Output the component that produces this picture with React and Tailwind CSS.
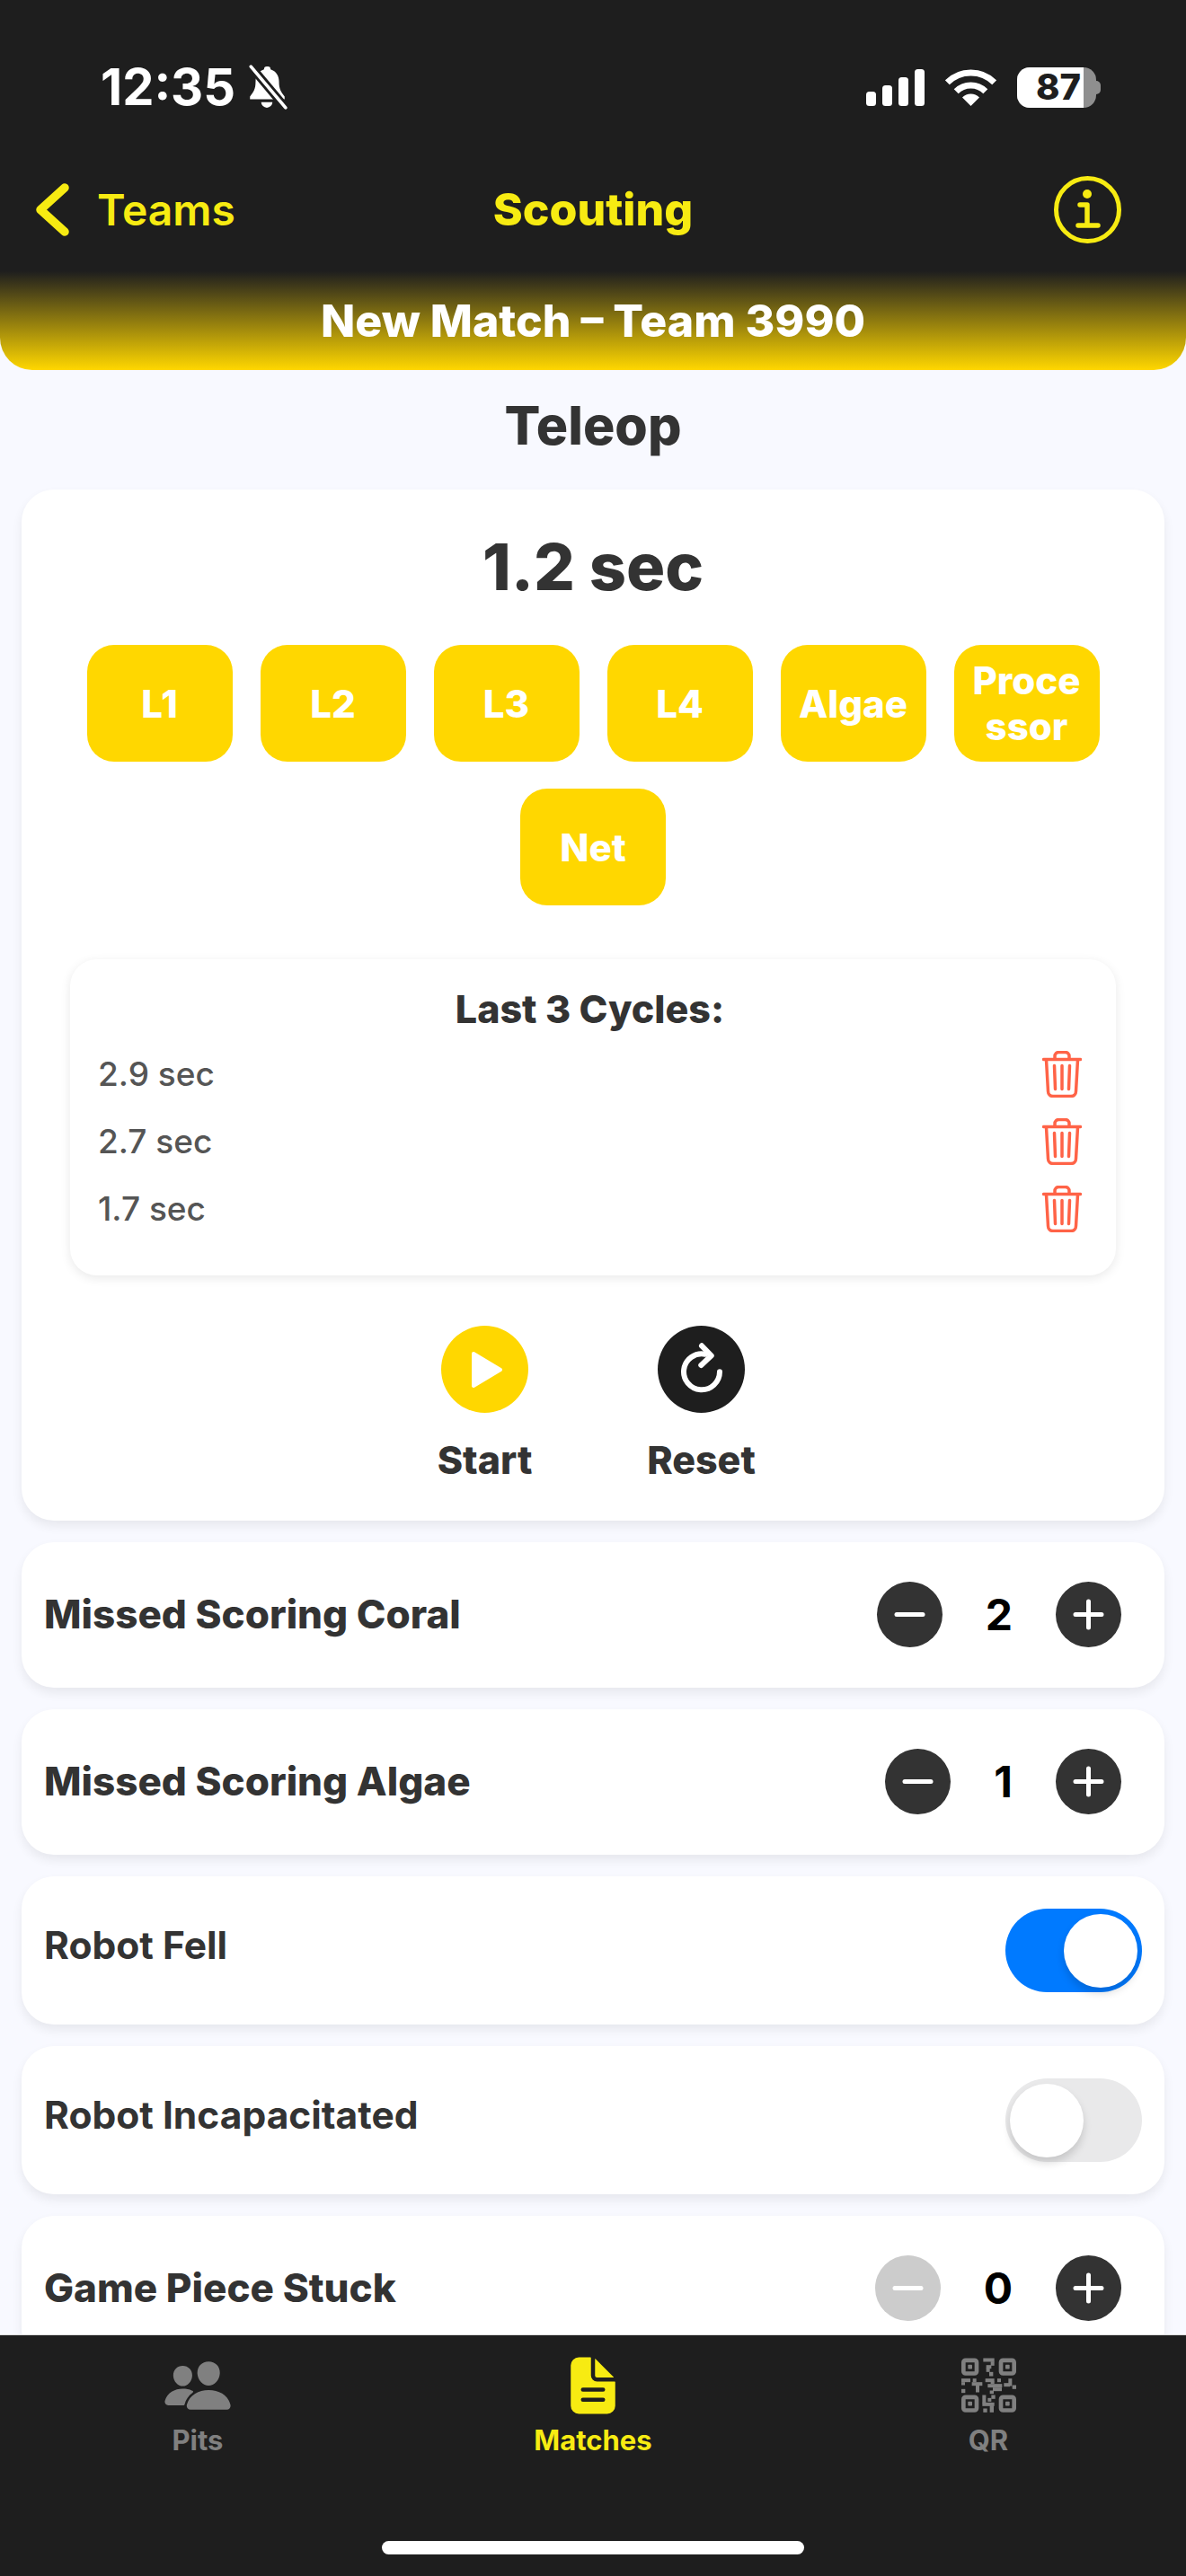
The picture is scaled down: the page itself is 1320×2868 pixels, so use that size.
import React from 'react';
import { IoPeople, IoDocumentText } from 'react-icons/io5';

const cycleButtons = ['L1', 'L2', 'L3', 'L4', 'Algae', 'Proce\nssor', 'Net'];
const cycles = ['2.9 sec', '2.7 sec', '1.7 sec'];

const Signal = () => (
  <svg width="65" height="41" viewBox="0 0 65 41" fill="#fff">
    <rect x="0" y="25" width="11" height="16" rx="3.5" />
    <rect x="18" y="18" width="11" height="23" rx="3.5" />
    <rect x="36" y="9" width="11" height="32" rx="3.5" />
    <rect x="54" y="0" width="11" height="41" rx="3.5" />
  </svg>
);

const Wifi = () => (
  <svg width="57" height="42" viewBox="0 0 57 42" fill="none">
    <path d="M2.3 15.8A37 37 0 0 1 54.7 15.8" stroke="#fff" strokeWidth="7" />
    <path d="M12.2 25.7A23 23 0 0 1 44.8 25.7" stroke="#fff" strokeWidth="7" />
    <path d="M28.5 42L19 32.5A13.5 13.5 0 0 1 38 32.5Z" fill="#fff" />
  </svg>
);

const BellSlash = () => (
  <svg width="47" height="50" viewBox="0 0 45 48">
    <path d="M22 2c-2 0-3 1-3 3-6 2-9 7-9 13 0 8-2 11-6 16v3h37v-3c-4-5-6-8-6-16 0-6-3-11-9-13 0-2-1-3-3-3z" fill="#fff" />
    <path d="M16 40a6 6 0 0 0 12 0z" fill="#fff" />
    <path d="M5 2L42 46" stroke="#1e1e1e" strokeWidth="9" />
    <path d="M5 2L42 46" stroke="#fff" strokeWidth="3.5" strokeLinecap="round" />
  </svg>
);

const Battery = () => (
  <div className="flex items-center">
    <div className="flex h-[45px] w-[88px] rounded-[14px] bg-[#8f8f8f]">
      <div className="flex w-[74px] items-center justify-end rounded-l-[14px] bg-white pr-[3px] text-[40px] font-extrabold leading-none text-[#1e1e1e]">87</div>
    </div>
    <div className="h-[15px] w-[5px] rounded-r-full bg-[#8f8f8f]" />
  </div>
);

const Chevron = () => (
  <svg width="37" height="59" viewBox="0 0 37 59" fill="none">
    <path d="M32 5L5 29.5L32 54" stroke="#f7eb12" strokeWidth="9.5" strokeLinecap="round" strokeLinejoin="round" />
  </svg>
);

const InfoIcon = () => (
  <svg width="75" height="75" viewBox="0 0 75 75" fill="none">
    <circle cx="37.5" cy="37.5" r="35" stroke="#f7eb12" strokeWidth="5" />
    <circle cx="37" cy="20" r="5" fill="#f7eb12" />
    <path d="M29 32H37V55M27 55H49" stroke="#f7eb12" strokeWidth="5.5" strokeLinecap="round" strokeLinejoin="round" />
  </svg>
);

const Trash = () => (
  <svg width="44" height="52" viewBox="0 0 44 52" fill="none" stroke="#ff6347" strokeWidth="3.5" strokeLinecap="round">
    <path d="M1.5 9.5H42.5" />
    <path d="M14 9V6a4.5 4.5 0 0 1 4.5-4.5h7A4.5 4.5 0 0 1 30 6v3" />
    <path d="M4.5 10l2 35a5.5 5.5 0 0 0 5.5 5.5h20a5.5 5.5 0 0 0 5.5-5.5l2-35" />
    <path d="M13.5 16.5l1 26M22 16.5v26M30.5 16.5l-1 26" />
  </svg>
);

const MinusIcon = () => (
  <svg width="35" height="35" viewBox="0 0 35 35"><path d="M3 17.5H32" stroke="#fff" strokeWidth="5" strokeLinecap="round" /></svg>
);

const PlusIcon = () => (
  <svg width="35" height="35" viewBox="0 0 35 35"><path d="M3 17.5H32M17.5 3V32" stroke="#fff" strokeWidth="5" strokeLinecap="round" /></svg>
);

const RefreshIcon = () => (
  <svg width="97" height="97" viewBox="0 0 97 97" fill="none" stroke="#fff" strokeWidth="6" strokeLinecap="round" strokeLinejoin="round">
    <path d="M69 51.3A20 20 0 1 1 53 31.7" />
    <path d="M49 22.3L59.7 33.3L48.3 44" />
  </svg>
);

// finder squares sit in the corners, the rest are loose modules
const qrModules = [
  [103, 32, 37, 12], [128, 43, 12, 14], [113, 55, 17, 12], [113, 65, 12, 13], [123, 78, 13, 14],
  [30, 100, 30, 12], [30, 112, 12, 10], [30, 135, 13, 13], [68, 100, 12, 12], [65, 112, 35, 12], [78, 122, 12, 24],
  [110, 100, 30, 12], [128, 110, 12, 8], [118, 118, 48, 12], [135, 130, 30, 12], [125, 140, 13, 11],
  [172, 115, 20, 12], [187, 100, 12, 25], [200, 122, 13, 13], [150, 100, 12, 12],
  [100, 155, 12, 27], [100, 180, 40, 12], [118, 165, 12, 12], [125, 190, 13, 23], [103, 200, 13, 13], [130, 155, 13, 13],
];

const QrIcon = () => (
  <svg width="61" height="62" viewBox="30 32 183 183" fill="#808080">
    {[[30, 32], [155, 32], [30, 155], [155, 155]].map(([x, y]) => (
      <g key={`${x}-${y}`}>
        <rect x={x + 7} y={y + 7} width="44" height="44" rx="7" fill="none" stroke="#808080" strokeWidth="14" />
        <rect x={x + 22} y={y + 22} width="14" height="14" rx="2" />
      </g>
    ))}
    {qrModules.map(([x, y, w, h], i) => (
      <rect key={i} x={x} y={y} width={w} height={h} />
    ))}
  </svg>
);

const Stepper = ({ label, value, disabled }) => (
  <div className="flex items-center justify-between rounded-[36px] bg-white pb-[45px] pl-[25px] pr-[48px] pt-[44px] shadow-[0_6px_12px_rgba(0,0,0,0.07)]">
    <span className="text-[44px] font-extrabold leading-[73px] text-[#333]">{label}</span>
    <div className="flex items-center">
      <div className={`flex h-[73px] w-[73px] items-center justify-center rounded-full ${disabled ? 'bg-[#ccc]' : 'bg-[#333]'}`}>
        <MinusIcon />
      </div>
      <span className="mx-[48px] text-[48px] font-bold leading-[73px] text-black">{value}</span>
      <div className="flex h-[73px] w-[73px] items-center justify-center rounded-full bg-[#333]">
        <PlusIcon />
      </div>
    </div>
  </div>
);

const ToggleRow = ({ label, on }) => (
  <div className="flex items-center justify-between rounded-[36px] bg-white py-[36px] pl-[25px] pr-[25px] shadow-[0_6px_12px_rgba(0,0,0,0.07)]">
    <span className="mb-[11px] text-[42.5px] font-bold text-[#333]">{label}</span>
    <div className={`flex h-[93px] w-[152px] items-center rounded-full px-[5px] ${on ? 'justify-end bg-[#007aff]' : 'justify-start bg-[#e9e9ea]'}`}>
      <div className="h-[82px] w-[82px] rounded-full bg-white shadow-[0_6px_10px_rgba(0,0,0,0.15)]" />
    </div>
  </div>
);

const TabItem = ({ icon, label, active }) => (
  <div className="flex w-[440px] flex-col items-center">
    <div className="flex h-[72px] items-center justify-center">{icon}</div>
    <span className={`mt-[7px] text-[31px] font-bold leading-[36px] ${active ? 'text-[#f7eb12]' : 'text-[#808080]'}`}>{label}</span>
  </div>
);

export default function App() {
  return (
    <div className="flex h-[2868px] w-[1320px] flex-col overflow-hidden bg-[#f8f9ff] [font-family:Inter,sans-serif]">
      <header className="h-[302px] shrink-0 bg-[#1e1e1e]">
        <div className="flex h-[194px] items-center justify-between pl-[112px] pr-[95px]">
          <div className="flex items-center gap-[12px]">
            <span className="text-[56px] font-bold leading-none text-white">12:35</span>
            <BellSlash />
          </div>
          <div className="flex items-center gap-[23px]">
            <Signal />
            <Wifi />
            <Battery />
          </div>
        </div>
        <div className="grid h-[78px] grid-cols-[1fr_auto_1fr] items-center px-[40px]">
          <div className="flex items-center gap-[31px]">
            <Chevron />
            <span className="mt-[2px] text-[48px] font-semibold text-[#f7eb12]">Teams</span>
          </div>
          <span className="text-[50px] font-extrabold text-[#f7eb12]">Scouting</span>
          <div className="flex justify-end pr-[32px]">
            <InfoIcon />
          </div>
        </div>
      </header>

      <div className="flex h-[110px] shrink-0 items-center justify-center rounded-b-[36px] bg-[linear-gradient(to_bottom,#1e1e1e,#ffd700)] text-[50px] font-extrabold text-white">
        New Match – Team 3990
      </div>

      <main className="flex min-h-0 flex-1 flex-col overflow-hidden px-[24px]">
        <h1 className="mb-[35px] mt-[26px] text-center text-[59px] font-extrabold leading-[72px] text-[#333]">Teleop</h1>

        <section className="flex shrink-0 flex-col rounded-[36px] bg-white px-[54px] pb-[42px] pt-[42px] shadow-[0_6px_12px_rgba(0,0,0,0.07)]">
          <div className="text-center text-[72px] font-extrabold leading-[88px] text-[#333]">1.2 sec</div>

          <div className="mt-[43px] flex flex-wrap justify-center gap-x-[31px] gap-y-[30px]">
            {cycleButtons.map((b) => (
              <div key={b} className="flex h-[130px] w-[162px] items-center justify-center whitespace-pre-line rounded-[30px] bg-[#ffd700] text-center text-[42px] font-extrabold leading-[51px] text-white">
                {b}
              </div>
            ))}
          </div>

          <div className="mt-[60px] rounded-[30px] bg-white pb-[37px] pl-[31px] pr-[38px] pt-[30px] shadow-[0_3px_12px_rgba(0,0,0,0.09)]">
            <div className="mb-[9px] text-center text-[43px] font-extrabold leading-[51px] text-[#333]">Last 3 Cycles:</div>
            {cycles.map((c, i) => (
              <div key={i} className="flex h-[75px] items-center justify-between">
                <span className="text-[37px] font-medium text-[#555]">{c}</span>
                <Trash />
              </div>
            ))}
          </div>

          <div className="mt-[56px] flex justify-center gap-[121px]">
            <div className="flex w-[120px] flex-col items-center">
              <div className="flex h-[97px] w-[97px] items-center justify-center rounded-full bg-[#ffd700]">
                <svg width="36" height="42" viewBox="0 0 36 42" className="ml-[4px]">
                  <path d="M3 3L33 21L3 39Z" fill="#fff" stroke="#fff" strokeWidth="4" strokeLinejoin="round" />
                </svg>
              </div>
              <span className="mt-[27px] text-[43px] font-extrabold leading-[51px] text-[#333]">Start</span>
            </div>
            <div className="flex w-[120px] flex-col items-center">
              <div className="h-[97px] w-[97px] rounded-full bg-[#1e1e1e]">
                <RefreshIcon />
              </div>
              <span className="mt-[27px] text-[43px] font-extrabold leading-[51px] text-[#333]">Reset</span>
            </div>
          </div>
        </section>

        <div className="mt-[24px] flex shrink-0 flex-col gap-[24px]">
          <Stepper label="Missed Scoring Coral" value={2} />
          <Stepper label="Missed Scoring Algae" value={1} />
          <ToggleRow label="Robot Fell" on />
          <ToggleRow label="Robot Incapacitated" />
          <Stepper label="Game Piece Stuck" value={0} disabled />
        </div>
      </main>

      <nav className="relative h-[269px] shrink-0 border-t border-[#ddd] bg-[#1e1e1e] pt-[20px]">
        <div className="flex">
          <TabItem label="Pits" icon={<IoPeople size={78} color="#808080" />} />
          <TabItem label="Matches" active icon={<IoDocumentText size={72} color="#f7eb12" />} />
          <TabItem label="QR" icon={<QrIcon />} />
        </div>
        <div className="absolute bottom-[24px] left-[425px] h-[15px] w-[470px] rounded-full bg-white" />
      </nav>
    </div>
  );
}
